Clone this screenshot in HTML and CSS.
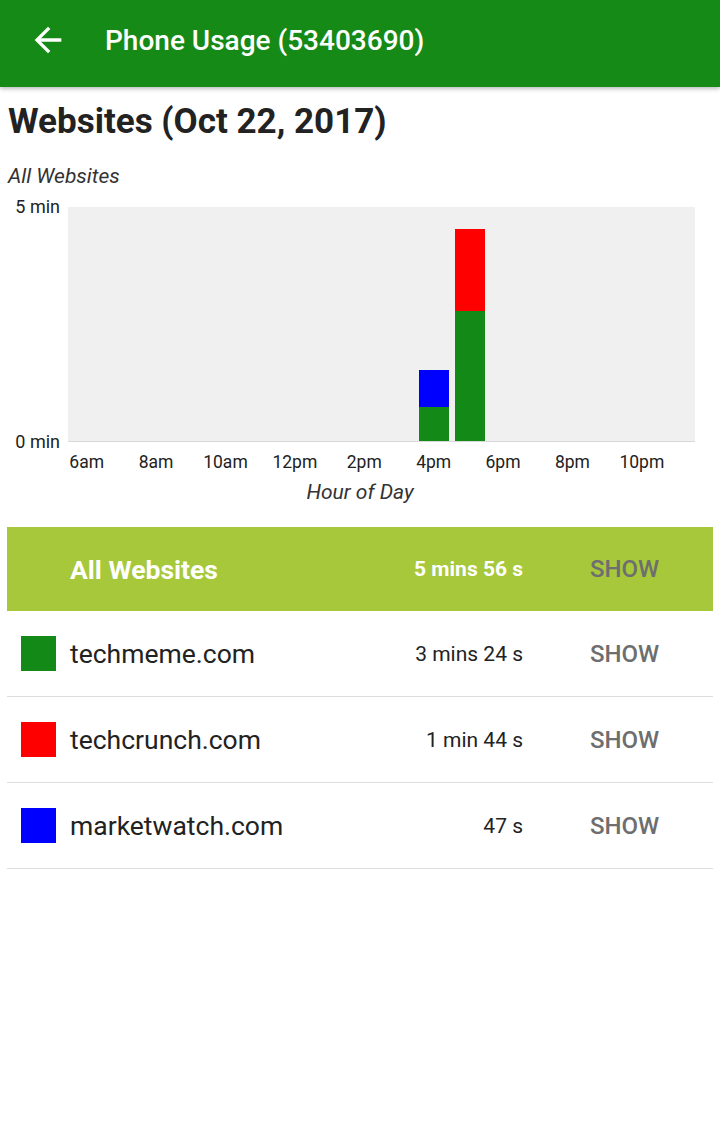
FILE: index.html
```html
<!DOCTYPE html>
<html lang="en">
<head>
    <meta charset="UTF-8">
    <meta name="viewport" content="width=device-width, initial-scale=1.0">
    <title>Phone Usage</title>
    <link rel="stylesheet" href="styles.css">
</head>
<body>
    <div class="toolbar">
        <svg class="back" viewBox="0 0 24 24" width="40" height="40">
            <path d="M20 11H7.83l5.59-5.59L12 4l-8 8 8 8 1.41-1.41L7.83 13H20v-2z" fill="#fff"/>
        </svg>
        <div class="toolbar-title">Phone Usage (53403690)</div>
    </div>

    <div class="content">
        <h1 class="page-title">Websites (Oct 22, 2017)</h1>
        <div class="chart-title">All Websites</div>

        <div class="chart">
            <div class="y-axis">
                <span>5 min</span>
                <span>0 min</span>
            </div>
            <div class="plot">
                <div class="bar" style="left: 351px; height: 71px;">
                    <div class="seg blue" style="height: 37px;"></div>
                    <div class="seg green" style="height: 34px;"></div>
                </div>
                <div class="bar" style="left: 387px; height: 212px;">
                    <div class="seg red" style="height: 82px;"></div>
                    <div class="seg green" style="height: 130px;"></div>
                </div>
            </div>
        </div>
        <div class="x-axis">
            <span>6am</span>
            <span>8am</span>
            <span>10am</span>
            <span>12pm</span>
            <span>2pm</span>
            <span>4pm</span>
            <span>6pm</span>
            <span>8pm</span>
            <span>10pm</span>
        </div>
        <div class="x-title">Hour of Day</div>

        <div class="usage-list">
            <div class="usage-row total">
                <div></div>
                <div class="site">All Websites</div>
                <div class="time">5 mins 56 s</div>
                <div class="show">SHOW</div>
            </div>
            <div class="usage-row">
                <div class="swatch green"></div>
                <div class="site">techmeme.com</div>
                <div class="time">3 mins 24 s</div>
                <div class="show">SHOW</div>
            </div>
            <div class="usage-row">
                <div class="swatch red"></div>
                <div class="site">techcrunch.com</div>
                <div class="time">1 min 44 s</div>
                <div class="show">SHOW</div>
            </div>
            <div class="usage-row">
                <div class="swatch blue"></div>
                <div class="site">marketwatch.com</div>
                <div class="time">47 s</div>
                <div class="show">SHOW</div>
            </div>
        </div>
    </div>
</body>
</html>
```

FILE: styles.css
```css
body {
    font-family: Roboto, "Noto Sans", sans-serif;
    margin: 0;
    padding: 0;
    background-color: #fff;
    color: #222;
}
.toolbar {
    height: 87px;
    display: flex;
    align-items: center;
    padding-left: 28px;
    background-color: #168a17;
    box-shadow: 0 2px 4px rgba(0,0,0,0.25);
}
.back {
    display: block;
    margin-top: -7px;
}
.toolbar-title {
    margin-left: 37px;
    margin-top: -6px;
    color: #fff;
    font-size: 28px;
    font-weight: 500;
}
.content {
    padding: 0 7px;
}
.page-title {
    margin: 14px 0 0 1px;
    font-size: 35px;
    font-weight: 700;
    line-height: 42px;
    color: #222;
}
.chart-title {
    margin: 21px 0 0 1px;
    font-size: 21px;
    font-style: italic;
    line-height: 24px;
    color: #333;
}
.chart {
    display: flex;
    margin-top: 19px;
}
.y-axis {
    width: 53px;
    display: flex;
    flex-direction: column;
    justify-content: space-between;
    align-items: flex-end;
    margin: -10px 8px -10px 0;
    font-size: 18px;
    line-height: 20px;
    color: #222;
}
.plot {
    position: relative;
    width: 627px;
    height: 234px;
    background-color: #f0f0f0;
    border-bottom: 1px solid #d8d8d8;
}
.bar {
    position: absolute;
    bottom: 0;
    width: 30px;
    display: flex;
    flex-direction: column;
}
.seg.green, .swatch.green {
    background-color: #138a17;
}
.seg.red, .swatch.red {
    background-color: #ff0000;
}
.seg.blue, .swatch.blue {
    background-color: #0000ff;
}
.x-axis {
    display: flex;
    margin: 10px 0 0 45px;
    font-size: 17.5px;
    line-height: 20px;
    color: #222;
}
.x-axis span {
    width: 69.4px;
    text-align: center;
}
.x-title {
    margin-top: 8px;
    text-align: center;
    font-size: 21px;
    font-style: italic;
    line-height: 24px;
    color: #333;
}
.usage-list {
    margin-top: 23px;
}
.usage-row {
    display: grid;
    grid-template-columns: 63px 1fr 160px 190px;
    align-items: center;
    height: 85px;
    border-bottom: 1px solid #ddd;
}
.usage-row.total {
    height: 84px;
    background-color: #a6c83a;
    border-bottom: none;
    color: #fff;
}
.swatch {
    width: 35px;
    height: 35px;
    margin-left: 14px;
}
.site {
    font-size: 26.5px;
}
.total .site {
    font-weight: 700;
    font-size: 26.5px;
}
.time {
    text-align: right;
    font-size: 21px;
}
.total .time {
    font-weight: 700;
}
.show {
    padding-left: 67px;
    font-size: 24px;
    font-weight: 500;
    color: #6e6e6e;
}
```
